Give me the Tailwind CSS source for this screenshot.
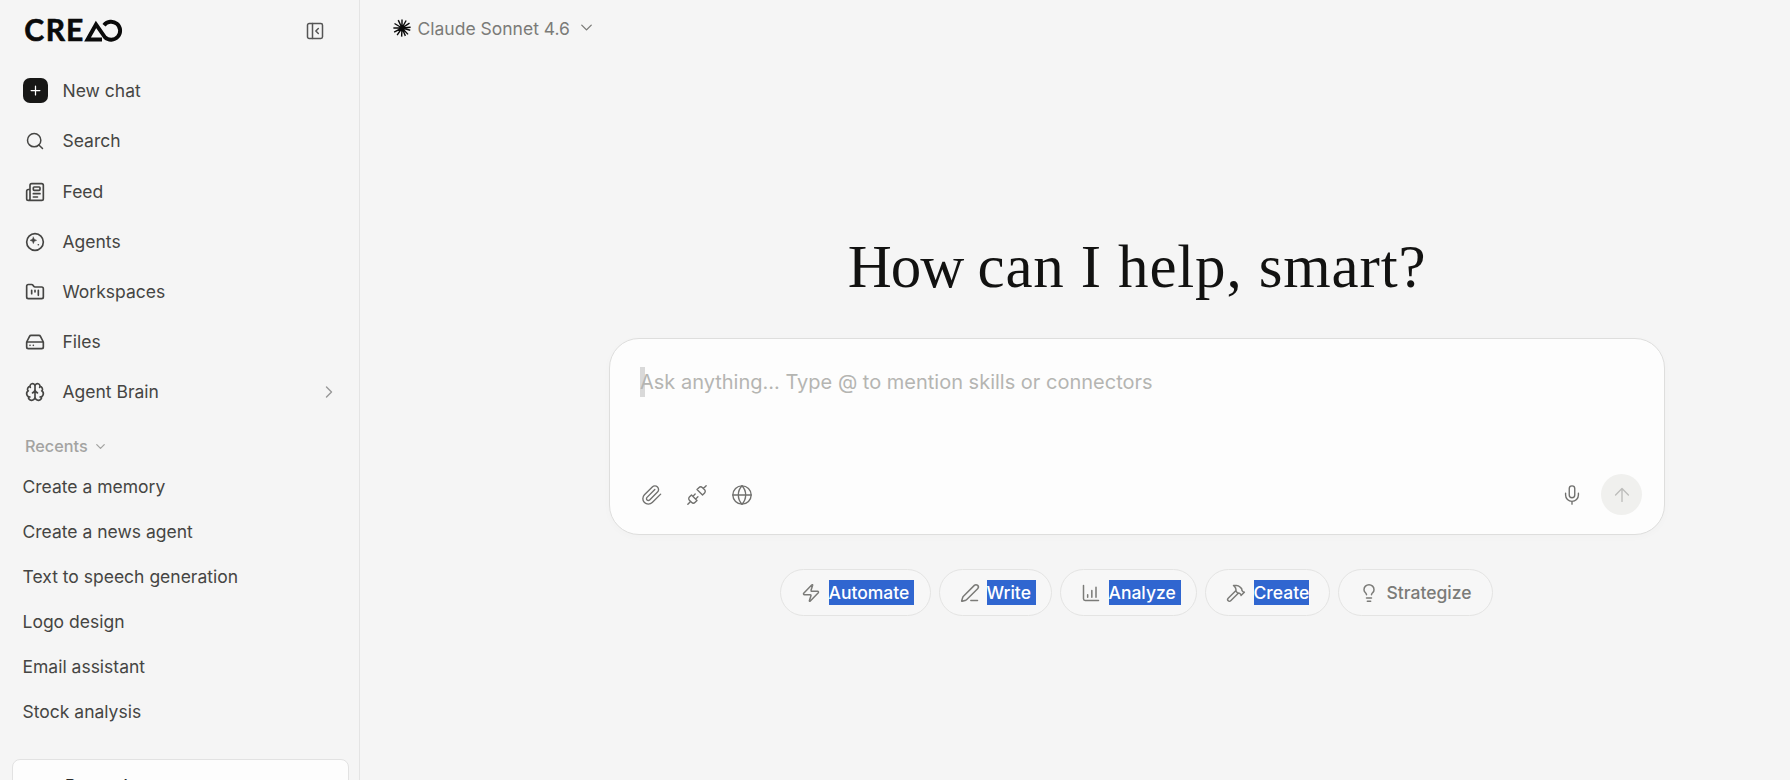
<!DOCTYPE html>
<html lang="en">
<head>
    <meta charset="UTF-8">
    <meta name="viewport" content="width=device-width, initial-scale=1.0">
    <title>CREAO</title>
    <script src="https://cdn.jsdelivr.net/npm/@tailwindcss/browser@4"></script>
</head>
<body class="flex h-screen overflow-hidden bg-[#f5f5f5] font-['Inter',sans-serif] text-[17.5px] text-[#454543]">
    <!-- Sidebar -->
    <aside class="flex h-full w-[360px] shrink-0 flex-col overflow-hidden border-r border-[#e4e4e4]">
        <header class="flex h-[66px] shrink-0 items-center justify-between pl-[24px] pr-[34px] pb-[4px]">
            <svg class="h-[36px] w-[100px] overflow-visible" viewBox="0 0 100 36" fill="none">
                <g fill="#0a0a0a" stroke="#0a0a0a" stroke-width=".6" font-family="Lato" font-weight="700" font-size="30">
                    <text x=".3" y="28.300">C</text>
                    <text x="21.700" y="28.300">R</text>
                    <text x="42" y="28.300">E</text>
                </g>
                <path d="M78 26.500H63.500L72 11.500L80.800 24.100A9 9 0 1 0 80 12.200" stroke="#0a0a0a" stroke-width="3.900"/>
            </svg>
            <svg class="size-5" viewBox="0 0 24 24" fill="none" stroke="#555" stroke-width="1.8" stroke-linecap="round" stroke-linejoin="round"><rect x="3" y="3" width="18" height="18" rx="2"/><path d="M9 3v18M16 15l-3-3 3-3"/></svg>
        </header>

        <nav class="flex shrink-0 flex-col">
            <a class="flex h-[50px] items-center gap-[14.5px] pl-[23px]">
                <span class="mb-px flex size-[25px] items-center justify-center rounded-[7px] bg-[#171716]"><svg class="size-[15px]" viewBox="0 0 24 24" stroke="#fff" stroke-width="2" stroke-linecap="round"><path d="M5 12h14M12 5v14"/></svg></span>
                New chat
            </a>
            <a class="mb-px flex h-[50px] items-center gap-[17.5px] pl-[25px]">
                <svg class="size-5" viewBox="0 0 24 24" fill="none" stroke="currentColor" stroke-width="1.8" stroke-linecap="round" stroke-linejoin="round"><circle cx="11" cy="11" r="8"/><path d="m21 21-4.300-4.300"/></svg>
                Search
            </a>
            <a class="flex h-[50px] items-center gap-[17.5px] pl-[25px]">
                <svg class="size-5" viewBox="0 0 24 24" fill="none" stroke="currentColor" stroke-width="2" stroke-linecap="round" stroke-linejoin="round"><path d="M15 18h-5M18 14h-8M4 22h16a2 2 0 0 0 2-2V4a2 2 0 0 0-2-2H8a2 2 0 0 0-2 2v16a2 2 0 0 1-4 0v-9a2 2 0 0 1 2-2h2"/><rect x="10" y="6" width="8" height="4" rx="1"/></svg>
                Feed
            </a>
            <a class="flex h-[50px] items-center gap-[17.5px] pl-[25px]">
                <svg class="size-5" viewBox="0 0 24 24" fill="none" stroke="currentColor" stroke-width="2" stroke-linecap="round" stroke-linejoin="round"><circle cx="12" cy="12" r="10"/><path d="M10 6 11.200 8.800 14 10 11.200 11.200 10 14 8.800 11.200 6 10 8.800 8.800Z" fill="currentColor" stroke-width=".5"/><circle cx="16" cy="15.300" r="1" fill="currentColor" stroke="none"/></svg>
                Agents
            </a>
            <a class="flex h-[50px] items-center gap-[17.5px] pl-[25px]">
                <svg class="size-5" viewBox="0 0 24 24" fill="none" stroke="currentColor" stroke-width="2" stroke-linecap="round" stroke-linejoin="round"><path d="M4 20h16a2 2 0 0 0 2-2V8a2 2 0 0 0-2-2h-7.930a2 2 0 0 1-1.660-.9l-.82-1.200A2 2 0 0 0 7.930 3H4a2 2 0 0 0-2 2v13c0 1.100.9 2 2 2Z"/><path d="M8 10v4M12 10v2M16 10v6"/></svg>
                Workspaces
            </a>
            <a class="flex h-[50px] items-center gap-[17.5px] pl-[25px]">
                <svg class="size-5" viewBox="0 0 24 24" fill="none" stroke="currentColor" stroke-width="2" stroke-linecap="round" stroke-linejoin="round"><path d="M22 12H2M5.450 5.110 2 12v6a2 2 0 0 0 2 2h16a2 2 0 0 0 2-2v-6l-3.450-6.890A2 2 0 0 0 16.760 4H7.240a2 2 0 0 0-1.790 1.110zM6 16h.01M10 16h.01"/></svg>
                Files
            </a>
            <a class="flex h-[50px] items-center gap-[17.5px] pl-[25px] pr-[20px]">
                <svg class="size-5" viewBox="0 0 24 24" fill="none" stroke="currentColor" stroke-width="2" stroke-linecap="round" stroke-linejoin="round"><path d="M12 18V5M15 13a4.170 4.170 0 0 1-3-4 4.170 4.170 0 0 1-3 4M17.598 6.500A3 3 0 1 0 12 5a3 3 0 1 0-5.598 1.500M17.997 5.125a4 4 0 0 1 2.526 5.770M18 18a4 4 0 0 0 2-7.464M19.967 17.483A4 4 0 1 1 12 18a4 4 0 1 1-7.967-.517M6 18a4 4 0 0 1-2-7.464M6.003 5.125a4 4 0 0 0-2.526 5.770"/></svg>
                <span class="grow">Agent Brain</span>
                <svg class="size-5" viewBox="0 0 24 24" fill="none" stroke="#999" stroke-width="1.700" stroke-linecap="round" stroke-linejoin="round"><path d="m9 18 6-6-6-6"/></svg>
            </a>
        </nav>

        <div class="mt-[14px] flex h-[30px] shrink-0 items-center gap-[5px] pl-[25px] text-[16.250px] font-medium text-[#a3a3a1]">
            Recents
            <svg class="size-[15px]" viewBox="0 0 24 24" fill="none" stroke="currentColor" stroke-width="2" stroke-linecap="round" stroke-linejoin="round"><path d="m6 9 6 6 6-6"/></svg>
        </div>
        <ul class="mt-[3px] shrink-0 pl-[22.5px] leading-[45px]">
            <li>Create a memory</li>
            <li>Create a news agent</li>
            <li>Text to speech generation</li>
            <li>Logo design</li>
            <li>Email assistant</li>
            <li>Stock analysis</li>
        </ul>

        <div class="ml-3 mr-[10px] mt-[25px] h-[70px] shrink-0 rounded-[8px] border border-[#e2e2e2] bg-[#fdfdfd] pl-[52px] pt-[13px] font-medium leading-[25px] text-[#2b2b2a]">Rewards</div>
    </aside>

    <!-- Main area -->
    <main class="flex grow flex-col">
        <header class="flex h-[57px] shrink-0 items-center pl-[33px] text-[#7b7b78]">
            <svg class="mr-[6.5px] mb-px size-[18px]" viewBox="-12 -12 24 24" stroke="#0a0a0a" stroke-width="1.900"><path d="M0 0V-11.500M0 0 5.500-10M0 0 10-6.500M0 0 11.500-1M0 0 11 3M0 0 8 8.500M0 0 4.500 10.500M0 0-.5 11.500M0 0-6.500 9.500M0 0-10.500 5.500M0 0H-11.500M0 0-10-6M0 0-5-10.500"/></svg>
            <span class="pt-[2px]">Claude Sonnet 4.6</span>
            <svg class="ml-[7px] mb-[2px] size-[19px]" viewBox="0 0 24 24" fill="none" stroke="currentColor" stroke-width="1.700" stroke-linecap="round" stroke-linejoin="round"><path d="m6 9 6 6 6-6"/></svg>
        </header>

        <section class="ml-[249px] mt-[173px] flex w-[1056px] flex-col items-center">
            <h1 class="h-[108px] whitespace-nowrap pt-[2px] font-['Liberation_Serif',serif] text-[61px] leading-[70px] tracking-[0.85px] text-[#121211]"><span class="tracking-[-1px]">How </span>can I help, smart?</h1>

            <div class="flex h-[197px] w-full flex-col justify-between rounded-[30px] border border-[#dededd] bg-[#fdfdfd] pb-[19px] pl-[30px] pr-[22px] pt-[28px] shadow-[0_2px_8px_rgba(0,0,0,0.02)]">
                <div class="relative text-[20px] leading-[30px] text-[#b5b5b2]">
                    <span class="absolute left-0 top-0 h-[30px] w-[5px] bg-[#d9d9d9]"></span>
                    <span class="relative">Ask anything... Type @ to mention skills or connectors</span>
                </div>
                <div class="flex items-center pl-px text-[#70706e]">
                    <svg class="size-[22px]" viewBox="0 0 24 24" fill="none" stroke="currentColor" stroke-width="1.500" stroke-linecap="round" stroke-linejoin="round"><path d="m21.440 11.050-9.190 9.190a6 6 0 0 1-8.490-8.490l8.570-8.570A4 4 0 1 1 18 8.840l-8.590 8.570a2 2 0 0 1-2.830-2.830l8.490-8.480"/></svg>
                    <svg class="ml-[23px] size-[22px]" viewBox="0 0 24 24" fill="none" stroke="currentColor" stroke-width="1.500" stroke-linecap="round" stroke-linejoin="round"><path d="m19 5 3-3M2 22l3-3M6.300 20.300a2.400 2.400 0 0 0 3.400 0L12 18l-6-6-2.300 2.300a2.400 2.400 0 0 0 0 3.400ZM7.500 13.500 10 11M10.500 16.500 13 14M12 6l6 6 2.300-2.300a2.400 2.400 0 0 0 0-3.400l-2.600-2.600a2.400 2.400 0 0 0-3.400 0Z"/></svg>
                    <svg class="ml-[23px] size-[22px]" viewBox="0 0 24 24" fill="none" stroke="currentColor" stroke-width="1.500" stroke-linecap="round" stroke-linejoin="round"><circle cx="12" cy="12" r="10"/><path d="M12 2a14.500 14.500 0 0 0 0 20 14.500 14.500 0 0 0 0-20M2 12h20"/></svg>
                    <svg class="ml-auto mr-[18px] size-[22px]" viewBox="0 0 24 24" fill="none" stroke="currentColor" stroke-width="1.500" stroke-linecap="round" stroke-linejoin="round"><path d="M12 19v3M19 10v2a7 7 0 0 1-14 0v-2"/><rect x="9" y="2" width="6" height="13" rx="3"/></svg>
                    <button class="flex size-[41px] items-center justify-center rounded-full bg-[#f0f0ee] text-[#bdbdbb]">
                        <svg class="size-[22px]" viewBox="0 0 24 24" fill="none" stroke="currentColor" stroke-width="1.500" stroke-linecap="round" stroke-linejoin="round"><path d="m5 12 7-7 7 7M12 19V5"/></svg>
                    </button>
                </div>
            </div>

            <!-- Suggestion chips -->
            <div class="mt-[34px] flex gap-[8px] pr-[2px] font-medium text-[#7b7b78]">
                <div class="flex h-[47px] w-[151px] items-center rounded-full border border-[#e4e4e3] bg-[#f7f7f7] pl-[20px]">
                    <svg class="mr-[8px] size-5" viewBox="0 0 24 24" fill="none" stroke="currentColor" stroke-width="1.800" stroke-linecap="round" stroke-linejoin="round"><path d="M4 14a1 1 0 0 1-.78-1.630l9.900-10.200a.5.5 0 0 1 .86.460l-1.920 6.020A1 1 0 0 0 13 10h7a1 1 0 0 1 .78 1.630l-9.900 10.200a.5.5 0 0 1-.86-.460l1.920-6.020A1 1 0 0 0 11 14z"/></svg>
                    <span class="h-[25px] w-[85px] bg-[#3066d0] leading-[25px] text-white">Automate</span>
                </div>
                <div class="flex h-[47px] w-[113px] items-center rounded-full border border-[#e4e4e3] bg-[#f7f7f7] pl-[20px]">
                    <svg class="mr-[7px] size-5" viewBox="0 0 24 24" fill="none" stroke="currentColor" stroke-width="1.800" stroke-linecap="round" stroke-linejoin="round"><path d="M13 21h8M21.174 6.812a1 1 0 0 0-3.986-3.987L3.842 16.174a2 2 0 0 0-.5.830l-1.321 4.352a.5.5 0 0 0 .623.622l4.353-1.320a2 2 0 0 0 .830-.497z"/></svg>
                    <span class="h-[25px] w-[49px] bg-[#3066d0] leading-[25px] text-white">Write</span>
                </div>
                <div class="flex h-[47px] w-[137px] items-center rounded-full border border-[#e4e4e3] bg-[#f7f7f7] pl-[20px]">
                    <svg class="mr-[8px] size-5" viewBox="0 0 24 24" fill="none" stroke="currentColor" stroke-width="1.800" stroke-linecap="round" stroke-linejoin="round"><path d="M3 3v16a2 2 0 0 0 2 2h16M13 17V9M18 17V5M8 17v-3"/></svg>
                    <span class="h-[25px] w-[72px] bg-[#3066d0] leading-[25px] text-white">Analyze</span>
                </div>
                <div class="flex h-[47px] w-[125px] items-center rounded-full border border-[#e4e4e3] bg-[#f7f7f7] pl-[20px]">
                    <svg class="mr-[8px] size-5" viewBox="0 0 24 24" fill="none" stroke="currentColor" stroke-width="1.800" stroke-linecap="round" stroke-linejoin="round"><path d="m15 12-9.373 9.373a1 1 0 0 1-3.001-3L12 9M18 15l4-4M21.500 11.500l-1.914-1.914A2 2 0 0 1 19 8.172v-.344a2 2 0 0 0-.586-1.414l-1.657-1.657A6 6 0 0 0 12.516 3H9l1.243 1.243A6 6 0 0 1 12 8.485V10l2 2h1.172a2 2 0 0 1 1.414.586L18.500 14.500"/></svg>
                    <span class="h-[25px] w-[55px] bg-[#3066d0] leading-[25px] text-white">Create</span>
                </div>
                <div class="flex h-[47px] w-[155px] items-center rounded-full border border-[#e4e4e3] bg-[#f7f7f7] pl-[20px]">
                    <svg class="mr-[8px] size-5" viewBox="0 0 24 24" fill="none" stroke="currentColor" stroke-width="1.800" stroke-linecap="round" stroke-linejoin="round"><path d="M15 14c.2-1 .7-1.700 1.500-2.500 1-.9 1.500-2.200 1.500-3.500A6 6 0 0 0 6 8c0 1 .2 2.200 1.500 3.500.7.700 1.300 1.500 1.500 2.500M9 18h6M10 22h4"/></svg>
                    <span class="leading-[25px]">Strategize</span>
                </div>
            </div>
        </section>
    </main>
</body>
</html>
